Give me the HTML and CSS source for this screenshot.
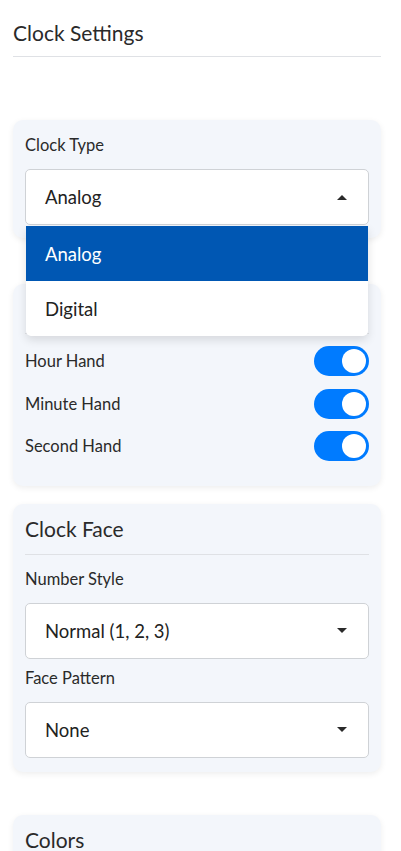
FILE: index.html
```html
<!DOCTYPE html>
<html lang="en">
<head>
<meta charset="utf-8">
<title>Clock Settings</title>
<link rel="stylesheet" href="styles.css">
</head>
<body>
<div class="panel">
  <h2 class="panel-title">Clock Settings</h2>

  <section class="card card-type">
    <div class="field">
      <label class="field-label">Clock Type</label>
      <div class="select-wrap">
        <div class="select open">
          <span>Analog</span>
          <span class="caret up"></span>
        </div>
        <ul class="options">
          <li class="option selected">Analog</li>
          <li class="option">Digital</li>
        </ul>
      </div>
    </div>
  </section>

  <section class="card card-hands">
    <div class="card-head"></div>
    <div class="toggle-row">
      <span>Hour Hand</span>
      <span class="toggle"><span class="knob"></span></span>
    </div>
    <div class="toggle-row">
      <span>Minute Hand</span>
      <span class="toggle"><span class="knob"></span></span>
    </div>
    <div class="toggle-row">
      <span>Second Hand</span>
      <span class="toggle"><span class="knob"></span></span>
    </div>
  </section>

  <section class="card card-face">
    <h3 class="card-title">Clock Face</h3>
    <div class="field">
      <label class="field-label">Number Style</label>
      <div class="select">
        <span>Normal (1, 2, 3)</span>
        <span class="caret"></span>
      </div>
    </div>
    <div class="field">
      <label class="field-label">Face Pattern</label>
      <div class="select">
        <span>None</span>
        <span class="caret"></span>
      </div>
    </div>
  </section>

  <section class="card card-colors">
    <h3 class="card-title">Colors</h3>
  </section>
</div>
</body>
</html>
```

FILE: styles.css
```css
* { box-sizing: border-box; }

html, body {
  margin: 0;
  padding: 0;
  background: #ffffff;
}

body {
  font-family: Lato, "Open Sans", "Noto Sans", sans-serif;
  color: #2a2a2a;
  overflow: hidden;
  height: 851px;
}

.panel {
  padding: 20px 20px 0 13px;
}

.panel-title {
  margin: 0;
  font-size: 21px;
  font-weight: 400;
  line-height: 26px;
  padding-bottom: 10px;
  border-bottom: 1px solid #dfe1e5;
  color: #2a2a2a;
}

.card {
  background: #f3f6fb;
  border-radius: 10px;
  box-shadow: 0 2px 6px rgba(0, 0, 0, 0.07);
  padding: 12px;
}

.card-type {
  margin-top: 63px;
  padding-top: 13px;
  padding-bottom: 13px;
  position: relative;
  z-index: 2;
}

.card-hands {
  margin-top: 46px;
  padding-bottom: 12px;
}

.card-head {
  height: 38px;
  border-bottom: 1px solid #dfe1e5;
  margin-bottom: 12px;
}

.card-face {
  margin-top: 18px;
  padding-bottom: 14px;
}

.card-colors {
  margin-top: 43px;
  height: 60px;
}

.card-title {
  margin: 0 0 12px;
  font-size: 21px;
  font-weight: 400;
  line-height: 26px;
  padding-bottom: 12px;
  border-bottom: 1px solid #dfe1e5;
  color: #2a2a2a;
}

.field + .field {
  margin-top: 7px;
}

.field-label {
  display: block;
  font-size: 16.5px;
  line-height: 24px;
  margin-bottom: 12px;
  color: #2a2a2a;
}

.select-wrap {
  position: relative;
}

.select {
  height: 56px;
  background: #ffffff;
  border: 1px solid #cfd2d6;
  border-radius: 5px;
  display: flex;
  align-items: center;
  justify-content: space-between;
  padding: 0 21px 0 19px;
  font-size: 18.5px;
  color: #222222;
}

.caret {
  width: 0;
  height: 0;
  border-left: 5px solid transparent;
  border-right: 5px solid transparent;
  border-top: 5px solid #2a2a2a;
}

.caret.up {
  border-top: 0;
  border-bottom: 5px solid #2a2a2a;
}

.options {
  position: absolute;
  left: 1px;
  right: 1px;
  top: 57px;
  margin: 0;
  padding: 0;
  list-style: none;
  background: #ffffff;
  border-radius: 0 0 5px 5px;
  box-shadow: 0 4px 10px rgba(0, 0, 0, 0.12);
  overflow: hidden;
}

.option {
  height: 55px;
  display: flex;
  align-items: center;
  padding-left: 19px;
  font-size: 18.5px;
  color: #222222;
}

.option.selected {
  background: #0057b3;
  color: #ffffff;
}

.toggle-row {
  display: flex;
  align-items: center;
  justify-content: space-between;
  height: 30px;
  margin-bottom: 12.5px;
  font-size: 16.5px;
  color: #2a2a2a;
}

.toggle {
  width: 55px;
  height: 30px;
  border-radius: 15px;
  background: #007bff;
  display: flex;
  align-items: center;
  justify-content: flex-end;
  padding-right: 3px;
}

.knob {
  width: 24px;
  height: 24px;
  border-radius: 50%;
  background: #ffffff;
}
```
